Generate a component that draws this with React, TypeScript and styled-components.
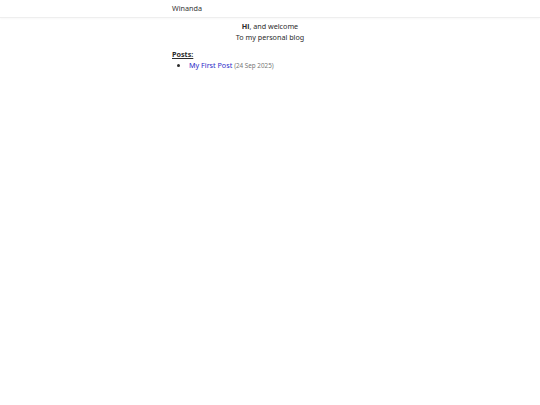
import React from 'react'
import styled, { createGlobalStyle } from 'styled-components'

const Global = createGlobalStyle`
    body{
        margin: 0;
        background: #fff;
        color: #2b2b2b;
        font-family: "Noto Sans", "Open Sans", sans-serif;
        font-size: 7.2px;
        line-height: 11px;
    }
`

const Header = styled.header`
    height: 17px;
    border-bottom: 1px solid #eee;
    box-shadow: 0 1px 2px rgba(0, 0, 0, 0.03);
    display: flex;
    align-items: center;
`

const Wrap = styled.div`
    width: 196px;
    margin: 0 auto;
`

const Brand = styled.a`
    color: #333;
    text-decoration: none;
`

const Intro = styled.section`
    text-align: center;
    margin-top: 3px;
`

const Heading = styled.h4`
    margin: 6px 0 0;
    text-decoration: underline;
    font-weight: 700;
    font-size: 7.2px;
`

const List = styled.ul`
    margin: 0;
    padding-left: 17px;
`

const PostLink = styled.a`
    color: #2a2ac8;
    text-decoration: none;
`

const Date = styled.span`
    color: #777;
    font-size: 6.3px;
`

type post = {
    title: string,
    date: string
}

const posts: post[] = [{ title: 'My First Post', date: '24 Sep 2025' }]

const App: React.FC = () => (
    <>
        <Global />
        <Header>
            <Wrap>
                <Brand href="#">Winanda</Brand>
            </Wrap>
        </Header>
        <Wrap>
            <Intro>
                <div><b>Hi</b>, and welcome</div>
                <div>To my personal blog</div>
            </Intro>
            <Heading>Posts:</Heading>
            <List>
                {posts.map(p => (
                    <li key={p.title}>
                        <PostLink href="#">{p.title}</PostLink> <Date>({p.date})</Date>
                    </li>
                ))}
            </List>
        </Wrap>
    </>
)

export default App
